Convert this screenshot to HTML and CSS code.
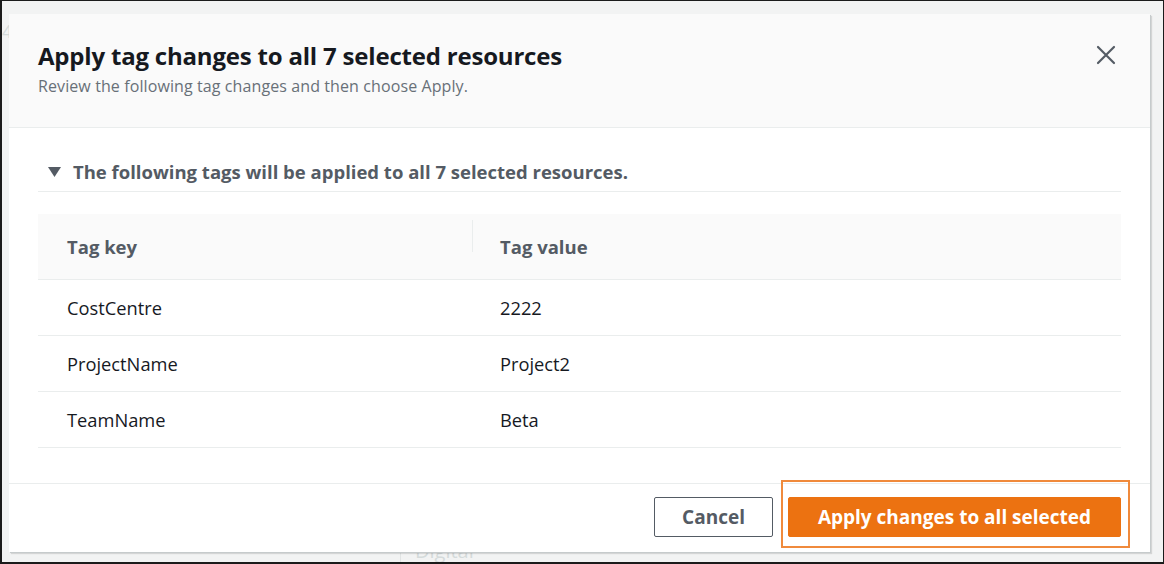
FILE: index.html
```html
<!DOCTYPE html>
<html lang="en">
<head>
<meta charset="utf-8">
<title>Apply tag changes</title>
<link rel="stylesheet" href="styles.css">
</head>
<body>
<div class="frame">
  <div class="backdrop-bit bd-four">4</div>
  <div class="backdrop-bit bd-digital">Digital</div>
  <div class="backdrop-bit bd-line"></div>
  <div class="modal">
    <div class="modal-header">
      <div class="header-text">
        <h1 class="title">Apply tag changes to all 7 selected resources</h1>
        <p class="subtitle">Review the following tag changes and then choose Apply.</p>
      </div>
      <button class="close" aria-label="Close">
        <svg width="20" height="20" viewBox="0 0 20 20"><path d="M2 2 L18 18 M18 2 L2 18" stroke="#545b64" stroke-width="2.2" fill="none" stroke-linecap="round"/></svg>
      </button>
    </div>
    <div class="modal-body">
      <div class="section-head">
        <svg class="caret" width="13" height="10" viewBox="0 0 13 10"><path d="M0 0 H13 L6.5 10 Z" fill="#545b64"/></svg>
        <span>The following tags will be applied to all 7 selected resources.</span>
      </div>
      <div class="table">
        <div class="thead">
          <div class="th col-key">Tag key</div>
          <div class="th col-val"><span class="divider"></span>Tag value</div>
        </div>
        <div class="tr"><div class="td col-key">CostCentre</div><div class="td col-val">2222</div></div>
        <div class="tr"><div class="td col-key">ProjectName</div><div class="td col-val">Project2</div></div>
        <div class="tr"><div class="td col-key">TeamName</div><div class="td col-val">Beta</div></div>
      </div>
    </div>
    <div class="modal-footer">
      <button class="btn btn-normal">Cancel</button>
      <div class="primary-wrap">
        <button class="btn btn-primary">Apply changes to all selected</button>
        <span class="highlight"></span>
      </div>
    </div>
  </div>
</div>
</body>
</html>
```

FILE: styles.css
```css
html, body {
  margin: 0;
  padding: 0;
  background: #000;
}
body {
  font-family: "Open Sans", "Noto Sans", Arial, sans-serif;
}
.frame {
  position: relative;
  box-sizing: border-box;
  width: 1164px;
  height: 564px;
  border-style: solid;
  border-color: #1b1b1b;
  border-width: 1px 1px 2px 2px;
  background: #f2f3f3;
  padding: 13px 0 0 7px;
  overflow: hidden;
}
.backdrop-bit {
  position: absolute;
  color: #d5dbdb;
  font-size: 18px;
}
.bd-four { left: 0; top: 18px; }
.bd-digital { left: 413px; top: 536px; font-size: 20px; }
.bd-line { left: 398px; top: 540px; width: 1px; height: 30px; background: #e1e4e4; }

.modal {
  position: relative;
  z-index: 1;
  box-sizing: border-box;
  width: 1141px;
  height: 538px;
  background: #fff;
  box-shadow: 1px 1px 0 #c6cbcc, 2px 2px 1px rgba(0,0,0,0.12);
  display: flex;
  flex-direction: column;
}
.modal-header {
  background: #fafafa;
  border-bottom: 1px solid #eaeded;
  padding: 27px 29px 30px 29px;
  display: flex;
  justify-content: space-between;
  align-items: flex-start;
}
.title {
  margin: 0;
  font-size: 24px;
  line-height: 30px;
  font-weight: 700;
  color: #16191f;
  letter-spacing: -0.2px;
}
.subtitle {
  margin: 4px 0 0 0;
  font-size: 16px;
  line-height: 22px;
  color: #687078;
  letter-spacing: 0.1px;
}
.close {
  border: 0;
  background: none;
  padding: 0;
  margin: 4px 5px 0 0;
  width: 20px;
  height: 20px;
  cursor: pointer;
}
.close svg { display: block; }

.modal-body {
  padding: 32px 29px 35px 29px;
}
.section-head {
  display: flex;
  align-items: center;
  gap: 12px;
  padding: 0 0 7px 10px;
  border-bottom: 1px solid #eaeded;
  font-size: 18.5px;
  line-height: 24px;
  font-weight: 700;
  color: #545b64;
}
.caret { display: block; }
.table {
  margin-top: 22px;
}
.thead {
  display: flex;
  background: #fafafa;
  border-bottom: 1px solid #eaeded;
  height: 65px;
  align-items: center;
}
.th {
  font-size: 18.5px;
  font-weight: 700;
  color: #545b64;
  position: relative;
}
.col-key { width: 434px; padding-left: 29px; box-sizing: border-box; }
.col-val { flex: 1; padding-left: 28px; }
.divider {
  position: absolute;
  left: 0;
  top: -14px;
  width: 1px;
  height: 32px;
  background: #eaeded;
}
.tr {
  display: flex;
  align-items: center;
  height: 55px;
  border-bottom: 1px solid #eaeded;
}
.td {
  font-size: 18.3px;
  color: #16191f;
}

.modal-footer {
  margin-top: auto;
  border-top: 1px solid #eaeded;
  display: flex;
  justify-content: flex-end;
  align-items: center;
  gap: 15px;
  padding: 13px 29px 15px 0;
}
.btn {
  font-family: inherit;
  height: 40px;
  box-sizing: border-box;
  border-radius: 2px;
  font-size: 19px;
  font-weight: 700;
  cursor: pointer;
  padding: 0;
}
.btn-normal {
  width: 119px;
  background: #fff;
  border: 1px solid #545b64;
  color: #545b64;
}
.primary-wrap {
  position: relative;
}
.btn-primary {
  display: block;
  width: 333px;
  background: #ec7211;
  border: 1px solid #ec7211;
  color: #fff;
}
.highlight {
  position: absolute;
  left: -7px;
  right: -9px;
  top: -17px;
  bottom: -11px;
  border: 2px solid #f08a3c;
  pointer-events: none;
}
```
